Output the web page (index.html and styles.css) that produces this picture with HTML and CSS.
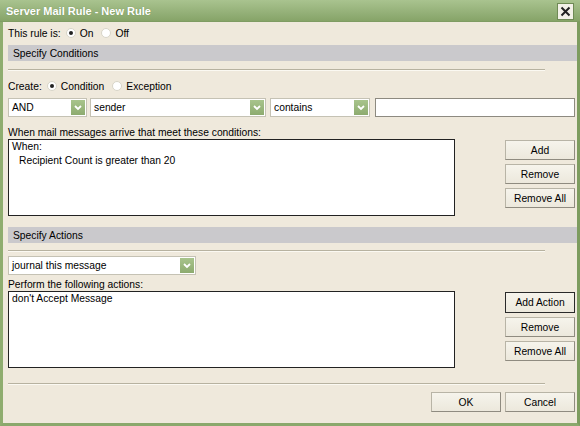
FILE: index.html
```html
<!DOCTYPE html>
<html>
<head>
<meta charset="utf-8">
<link rel="stylesheet" href="styles.css">
</head>
<body>
<div class="window">
  <div class="titlebar">
    <span class="title">Server Mail Rule - New Rule</span>
    <span class="close"><svg width="11" height="11" viewBox="0 0 11 11"><path d="M1.5 1.5 L9.5 9.5 M9.5 1.5 L1.5 9.5" stroke="#222" stroke-width="2"/></svg></span>
  </div>
  <div class="content">
    <div class="row rule-row">
      <span>This rule is:</span>
      <span class="radio on"></span><span>On</span>
      <span class="radio second"></span><span>Off</span>
    </div>
    <div class="section-bar">Specify Conditions</div>
    <div class="sep sep1"></div>
    <div class="row create-row">
      <span>Create:</span>
      <span class="radio on"></span><span>Condition</span>
      <span class="radio second"></span><span>Exception</span>
    </div>
    <div class="row combos">
      <div class="combo w-and"><span class="val">AND</span><span class="arrow"><svg width="8" height="6" viewBox="0 0 8 6"><path d="M1 1 L4 4 L7 1" stroke="#fff" stroke-width="1.8" fill="none"/></svg></span></div>
      <div class="combo w-sender"><span class="val">sender</span><span class="arrow"><svg width="8" height="6" viewBox="0 0 8 6"><path d="M1 1 L4 4 L7 1" stroke="#fff" stroke-width="1.8" fill="none"/></svg></span></div>
      <div class="combo w-contains"><span class="val">contains</span><span class="arrow"><svg width="8" height="6" viewBox="0 0 8 6"><path d="M1 1 L4 4 L7 1" stroke="#fff" stroke-width="1.8" fill="none"/></svg></span></div>
      <div class="textbox"></div>
    </div>
    <div class="label lbl1">When mail messages arrive that meet these conditions:</div>
    <div class="list-row">
      <div class="listbox">
        <div>When:</div>
        <div class="indent">Recipient Count is greater than 20</div>
      </div>
      <div class="buttons">
        <div class="btn">Add</div>
        <div class="btn">Remove</div>
        <div class="btn">Remove All</div>
      </div>
    </div>
    <div class="section-bar bar2">Specify Actions</div>
    <div class="sep sep2"></div>
    <div class="row combos2">
      <div class="combo w-journal"><span class="val">journal this message</span><span class="arrow"><svg width="8" height="6" viewBox="0 0 8 6"><path d="M1 1 L4 4 L7 1" stroke="#fff" stroke-width="1.8" fill="none"/></svg></span></div>
    </div>
    <div class="label lbl2">Perform the following actions:</div>
    <div class="list-row">
      <div class="listbox">
        <div>don't Accept Message</div>
      </div>
      <div class="buttons b2">
        <div class="btn default">Add Action</div>
        <div class="btn">Remove</div>
        <div class="btn">Remove All</div>
      </div>
    </div>
    <div class="sep sep3"></div>
    <div class="footer">
      <div class="btn ok">OK</div>
      <div class="btn">Cancel</div>
    </div>
  </div>
</div>
</body>
</html>
```
FILE: styles.css
```css
* { box-sizing: border-box; }
html, body { margin: 0; padding: 0; }
body {
  width: 580px; height: 426px; overflow: hidden;
  font-family: "Liberation Sans", sans-serif;
  font-size: 10.3px; color: #000;
  background: #ede8da;
}
.window {
  width: 580px; height: 426px;
  background: #efe9dc;
  border-left: 3px solid #8fad6f;
  border-right: 3px solid #7d9c5f;
  border-bottom: 3px solid #8aa86c;
  display: flex; flex-direction: column;
}
.titlebar {
  height: 22px; margin: 0 -3px;
  background: linear-gradient(#a9c38f, #94b078 60%, #86a468);
  border-bottom: 1px solid #7f9c63;
  display: flex; align-items: center; justify-content: space-between;
  padding: 0 6px 0 6px;
}
.title {
  color: #fff; font-weight: bold; font-size: 11px;
  font-family: "Liberation Sans", "DejaVu Sans", sans-serif;
  text-shadow: 0 0 1px #6f8a55;
}
.close {
  width: 17px; height: 17px; margin-top: 2px;
  background: #f3f1e8; border: 1px solid #6f8a55;
  display: flex; align-items: center; justify-content: center;
}
.content {
  flex: 1; padding: 0 0 0 5px;
  display: flex; flex-direction: column;
}
.row { display: flex; align-items: center; }
.rule-row { height: 16px; margin-top: 3px; gap: 4px; }
.radio { margin-left: 1px; }
.radio.second { margin-left: 4px; }
.radio {
  width: 10px; height: 10px; border-radius: 50%;
  background: #fff; border: 1px solid #d8d5c8;
  position: relative; display: inline-block;
}
.radio.on::after {
  content: ""; position: absolute; left: 2px; top: 2px;
  width: 4px; height: 4px; border-radius: 50%; background: #222;
}
.section-bar {
  margin-top: 4px; height: 16px; background: #cac9cc;
  padding-left: 5px; display: flex; align-items: center;
}
.sep {
  height: 2px; width: 537px;
  border-top: 1px solid #b7b2a0; border-bottom: 1px solid #fbf9f2;
}
.sep1 { margin-top: 8px; }
.create-row { margin-top: 7px; height: 16px; gap: 4px; }
.combos { margin-top: 4px; height: 19px; }
.combo {
  height: 19px; background: #fff; border: 1px solid #c5c2b4;
  display: flex; align-items: center; justify-content: space-between;
  padding-left: 3px;
}
.arrow {
  width: 14px; height: 15px; margin-right: 1px;
  background: linear-gradient(#a8c48c, #8dab6f);
  display: flex; align-items: center; justify-content: center;
}
.w-and { width: 79px; }
.w-sender { width: 176px; margin-left: 3px; }
.w-contains { width: 100px; margin-left: 4px; }
.textbox {
  width: 200px; height: 19px; margin-left: 5px;
  background: #fff; border: 1px solid #8d8a80;
}
.label { height: 12px; line-height: 12px; }
.lbl1 { margin-top: 10px; }
.list-row { display: flex; align-items: flex-start; }
.listbox {
  width: 447px; height: 77px; background: #fff;
  border: 1px solid #222; padding: 1px 3px;
  line-height: 12px;
}
.indent { padding-left: 7px; margin-top: 2px; }
.buttons {
  margin-left: 50px; margin-top: 1px;
  display: flex; flex-direction: column; gap: 4px;
}
.btn {
  width: 70px; height: 20px;
  background: linear-gradient(#f6f4ec, #ece8dc);
  border: 1px solid #b8b4a6; border-right-color: #8f8b80; border-bottom-color: #8f8b80;
  display: flex; align-items: center; justify-content: center;
}
.btn.default { border: 1px solid #2a2a2a; height: 21px; }
.b2 { margin-top: 1px; }
.bar2 { margin-top: 11px; }
.sep2 { margin-top: 7px; }
.combos2 { margin-top: 4px; }
.w-journal { width: 188px; }
.lbl2 { margin-top: 4px; }
.sep3 { margin-top: 15px; }
.footer {
  margin-top: 7px; display: flex; gap: 4px; justify-content: flex-end;
  padding-right: 2px;
}
```
